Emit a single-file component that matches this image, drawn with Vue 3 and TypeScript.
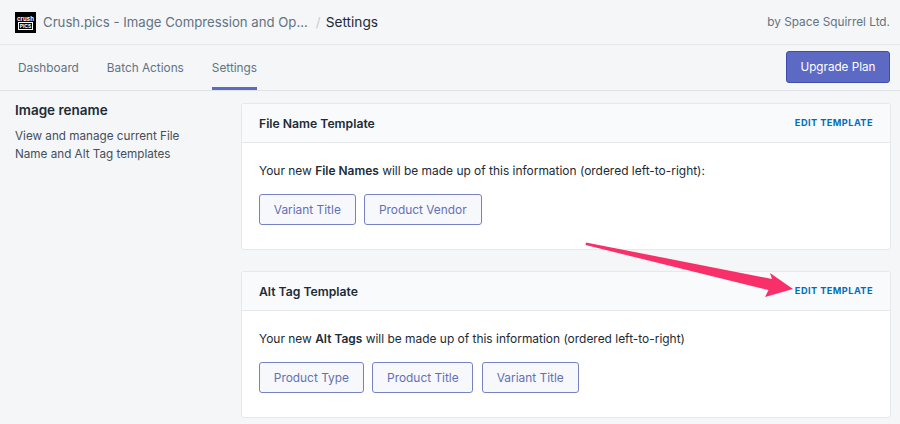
<script setup lang="ts">
interface Card { title: string; strong: string; tail: string; tags: string[] }
const cards: Card[] = [
  { title: 'File Name Template', strong: 'File Names', tail: ' will be made up of this information (ordered left-to-right):', tags: ['Variant Title', 'Product Vendor'] },
  { title: 'Alt Tag Template', strong: 'Alt Tags', tail: ' will be made up of this information (ordered left-to-right)', tags: ['Product Type', 'Product Title', 'Variant Title'] },
]
const tabs = ['Dashboard', 'Batch Actions', 'Settings']
</script>

<template>
  <div class="page">
    <header class="top">
      <div class="crumbs">
        <div class="logo"><span class="l1">crush</span><span class="l2">PICS</span></div>
        <span class="app">Crush.pics - Image Compression and Op...</span>
        <span class="sep">/</span>
        <span class="cur">Settings</span>
      </div>
      <span class="by">by Space Squirrel Ltd.</span>
    </header>
    <nav class="nav">
      <div class="tabs">
        <a v-for="t in tabs" :key="t" class="tab" :class="{ active: t === 'Settings' }">{{ t }}</a>
      </div>
      <button class="upgrade">Upgrade Plan</button>
    </nav>
    <main class="main">
      <aside class="side">
        <h2>Image rename</h2>
        <p>View and manage current File Name and Alt Tag templates</p>
      </aside>
      <div class="cards">
        <section v-for="c in cards" :key="c.title" class="card">
          <div class="head">
            <h3>{{ c.title }}</h3>
            <a class="edit">EDIT TEMPLATE</a>
          </div>
          <div class="body">
            <p>Your new <strong>{{ c.strong }}</strong>{{ c.tail }}</p>
            <div class="tags">
              <span v-for="t in c.tags" :key="t" class="tag">{{ t }}</span>
            </div>
          </div>
        </section>
      </div>
    </main>
    <svg class="arrow" width="900" height="424" viewBox="0 0 900 424">
      <polygon points="586,242.5 772,279 770,273 793,289 765,297 768.5,290 585.5,245" fill="#f8306a" />
    </svg>
  </div>
</template>

<style>
html, body { margin: 0; background: #f4f6f8; }
</style>

<style scoped>
.page {
  position: relative;
  width: 900px;
  height: 424px;
  overflow: hidden;
  background: #f4f6f8;
  font-family: Inter, "Liberation Sans", sans-serif;
  color: #212b36;
}
.top {
  height: 45px;
  box-sizing: border-box;
  border-bottom: 1px solid #e6e8eb;
  display: flex;
  align-items: center;
  justify-content: space-between;
  padding: 0 10px 0 15px;
  font-size: 13.2px;
}
.crumbs { display: flex; align-items: center; }
.logo {
  width: 21px;
  height: 21px;
  background: #000;
  display: flex;
  flex-direction: column;
  align-items: center;
  justify-content: center;
  color: #fff;
  font-size: 6px;
  line-height: 7px;
  font-weight: 700;
  margin-right: 7px;
  overflow: hidden;
}
.l2 { border: 1px solid #fff; padding: 0 1px; line-height: 6px; font-size: 5px; }
.app { color: #637381; }
.sep { color: #c4cdd5; margin: 0 5px 0 8px; }
.cur { color: #212b36; font-size: 13.7px; }
.by { color: #637381; font-size: 11.8px; }
.nav {
  height: 46px;
  box-sizing: border-box;
  border-bottom: 1px solid #dfe3e8;
  display: flex;
  justify-content: space-between;
  padding: 0 10px 0 18px;
}
.tabs { display: flex; gap: 28px; }
.tab {
  height: 45px;
  box-sizing: border-box;
  font-size: 11.8px;
  line-height: 47px;
  color: #637381;
}
.tab.active { border-bottom: 3px solid #5c6ac4; }
.upgrade {
  width: 104px;
  height: 32px;
  margin-top: 6px;
  border: 1px solid #3f4eae;
  border-radius: 3px;
  background: #5c6ac4;
  color: #fff;
  font: 400 11.7px Inter, "Liberation Sans", sans-serif;
}
.main {
  display: flex;
  padding: 12px 9px 0 15px;
}
.side { width: 226px; flex: none; }
.side h2 { margin: 0 0 10px; font-size: 13.5px; line-height: 14px; font-weight: 600; color: #212b36; }
.side p { margin: 0; width: 190px; font-size: 11.7px; line-height: 18px; color: #454f5b; }
.cards { width: 650px; display: flex; flex-direction: column; gap: 21px; }
.card {
  height: 147px;
  box-sizing: border-box;
  background: #fff;
  border: 1px solid #e6e8eb;
  border-radius: 3px;
}
.head {
  height: 39px;
  box-sizing: border-box;
  background: #f9fafb;
  border-bottom: 1px solid #e6e8eb;
  display: flex;
  align-items: center;
  justify-content: space-between;
  padding: 0 17px;
}
.head h3 { margin: 0; font-size: 12.2px; font-weight: 600; color: #212b36; }
.edit { font-size: 9.2px; font-weight: 700; letter-spacing: 0.45px; color: #006fbb; margin-bottom: 2px; }
.body { padding: 19px 17px 0; }
.body p { margin: 0; font-size: 11.95px; line-height: 18px; color: #212b36; }
.body strong { font-weight: 600; }
.tags { display: flex; gap: 8.5px; margin-top: 14px; }
.tag {
  height: 31px;
  box-sizing: border-box;
  padding: 0 13.8px;
  border: 1px solid #7682c2;
  border-radius: 3px;
  background: #f7f8fc;
  color: #6470b4;
  font-size: 11.9px;
  line-height: 29px;
}
.arrow { position: absolute; left: 0; top: 0; pointer-events: none; }
</style>
